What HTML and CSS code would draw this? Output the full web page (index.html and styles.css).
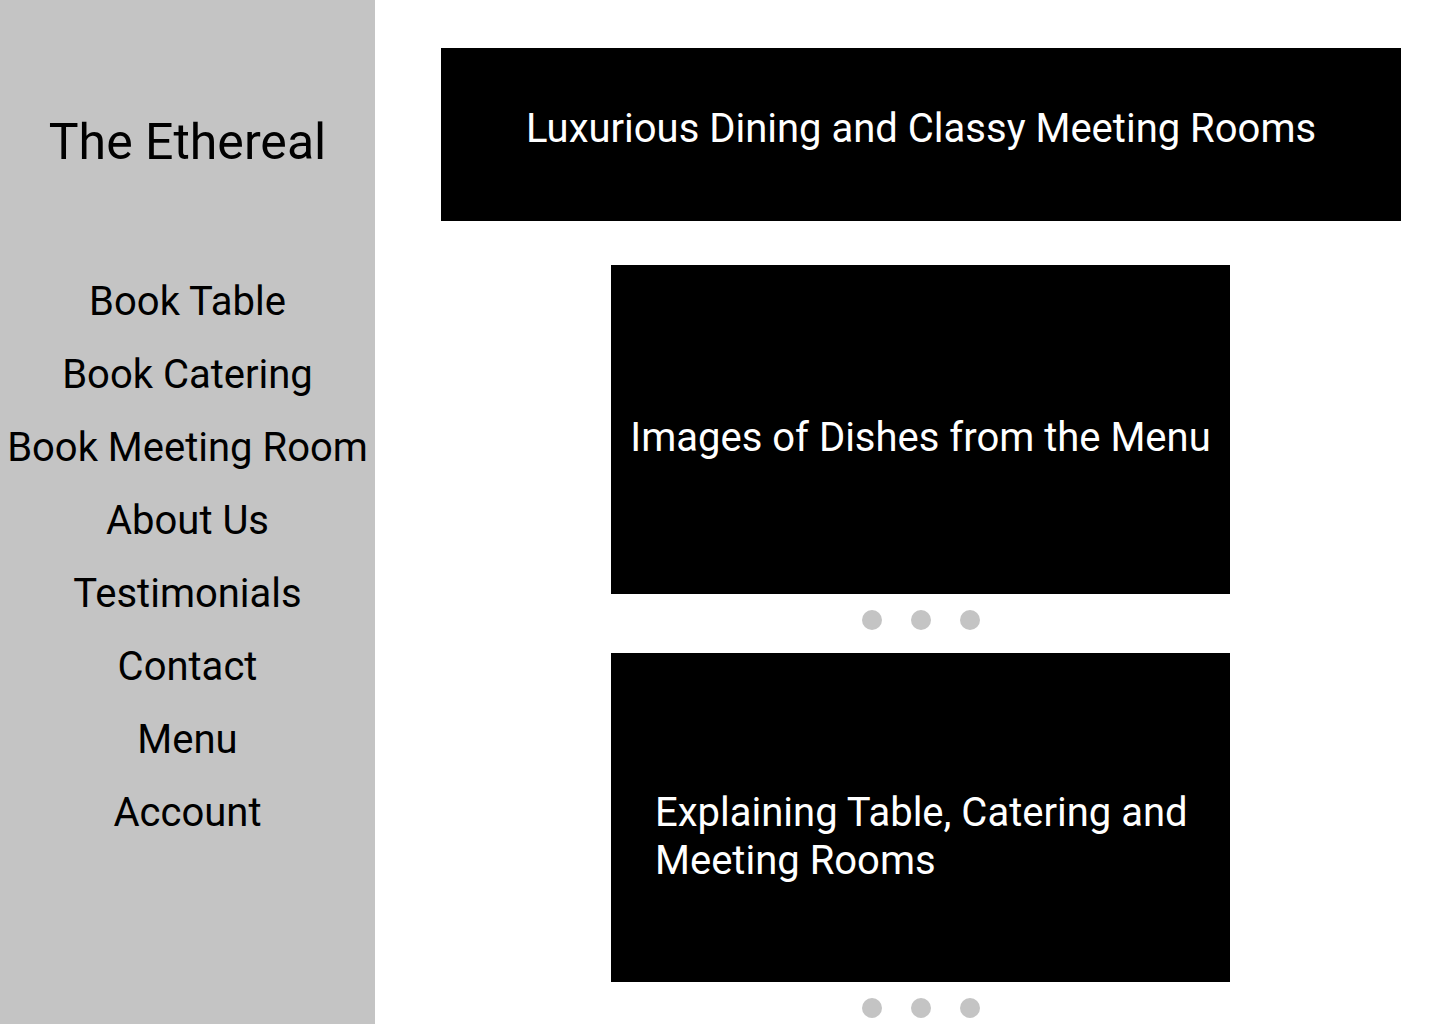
FILE: index.html
```html
<!DOCTYPE html>
<html>
<head>
	<link rel="stylesheet" href="styles.css">
</head>
<body>
	<aside class="sidebar">
		<h1 class="brand">The Ethereal</h1>
		<nav class="nav">
			<a href="#">Book Table</a>
			<a href="#">Book Catering</a>
			<a href="#">Book Meeting Room</a>
			<a href="#">About Us</a>
			<a href="#">Testimonials</a>
			<a href="#">Contact</a>
			<a href="#">Menu</a>
			<a href="#">Account</a>
		</nav>
	</aside>

	<main class="content">
		<div class="banner">Luxurious Dining and Classy Meeting Rooms</div>

		<section class="slider">
			<div class="slide slide-center">Images of Dishes from the Menu</div>
			<div class="dots">
				<span class="dot"></span>
				<span class="dot"></span>
				<span class="dot"></span>
			</div>
		</section>

		<section class="slider">
			<div class="slide slide-left">Explaining Table, Catering and Meeting Rooms</div>
			<div class="dots">
				<span class="dot"></span>
				<span class="dot"></span>
				<span class="dot"></span>
			</div>
		</section>
	</main>
</body>
</html>
```

FILE: styles.css
```css
body {
  margin: 0;
  font-family: Roboto, "Liberation Sans", sans-serif;
  background-color: #ffffff;
  color: #000000;
  display: flex;
  height: 1024px;
  overflow: hidden;
}

.sidebar {
  width: 375px;
  flex: 0 0 375px;
  background-color: #c4c4c4;
  text-align: center;
}

.brand {
  font-size: 50px;
  font-weight: 400;
  margin: 112px 0 0;
  line-height: 60px;
}

.nav {
  display: flex;
  flex-direction: column;
  margin-top: 106px;
  gap: 26px;
}

.nav a {
  color: #000000;
  text-decoration: none;
  font-size: 40px;
  line-height: 47px;
}

.content {
  flex: 1;
  padding: 48px 39px 0 66px;
}

.banner {
  background-color: #000000;
  color: #ffffff;
  height: 173px;
  font-size: 40px;
  display: flex;
  align-items: center;
  justify-content: center;
  padding-bottom: 12px;
  box-sizing: border-box;
}

.slider {
  width: 619px;
  margin: 44px 0 0 170px;
}

.slider + .slider {
  margin-top: 23px;
}

.slide {
  background-color: #000000;
  color: #ffffff;
  height: 329px;
  font-size: 40px;
  line-height: 48px;
  display: flex;
  align-items: center;
  box-sizing: border-box;
}

.slide-center {
  justify-content: center;
  padding-top: 16px;
}

.slide-left {
  padding: 38px 30px 0 44px;
}

.dots {
  display: flex;
  justify-content: center;
  gap: 29px;
  margin-top: 16px;
}

.dot {
  width: 20px;
  height: 20px;
  border-radius: 50%;
  background-color: #c4c4c4;
}
```
